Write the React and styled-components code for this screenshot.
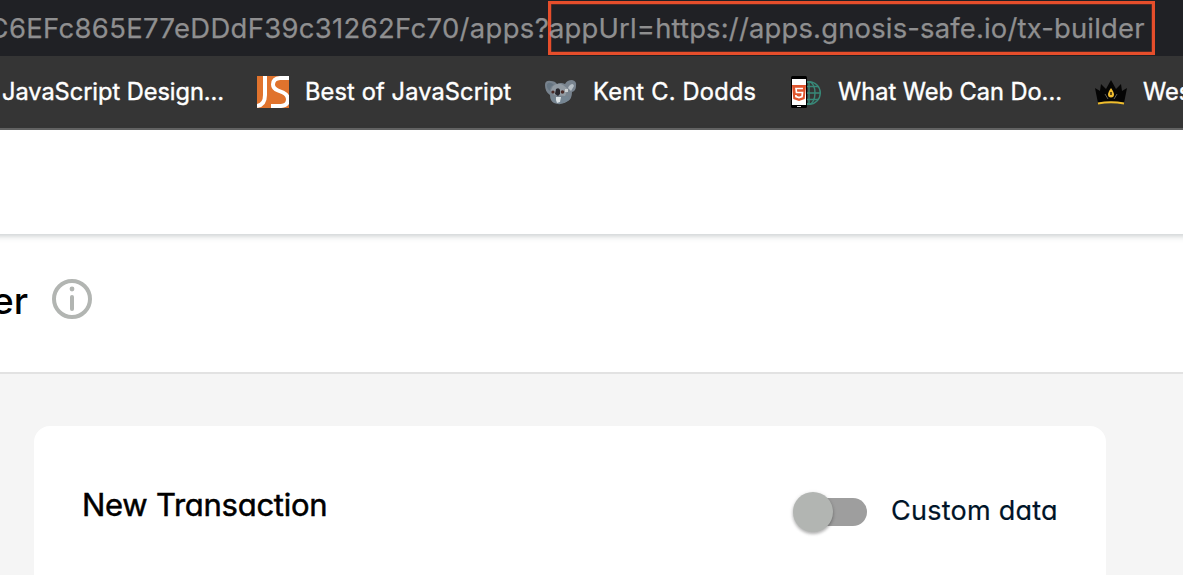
import React from "react";
import styled, { createGlobalStyle } from "styled-components";

const GlobalStyle = createGlobalStyle`
  * { box-sizing: border-box; }
  html, body { margin: 0; overflow: hidden; background: #f5f5f5; }
`;

const Page = styled.div`
  display: flex;
  flex-direction: column;
  width: 1183px;
  height: 575px;
  overflow: hidden;
  background: #f5f5f5;
  font-family: Inter, "Liberation Sans", sans-serif;
  white-space: pre;
`;

const AddressBar = styled.div`
  display: flex;
  flex: none;
  height: 56px;
  padding-top: 1px;
  background: #202125;
  color: #8f8f90;
  font-size: 27.4px;
  line-height: 55px;
  -webkit-text-stroke: 0.25px currentColor;
`;

const UrlStart = styled.span`
  display: flex;
  justify-content: flex-end;
  flex: none;
  width: 549px;
  letter-spacing: ${(p) => p.$tracking}px;
`;

const UrlQuery = styled.span`
  flex: none;
  width: 607px;
  height: 54px;
  margin-left: -1px;
  border: 3px solid #e64e2b;
  box-shadow: inset 0 0 0 0.5px #7c3428;
  line-height: 49px;
  text-indent: -2px;
  letter-spacing: ${(p) => p.$tracking}px;
`;

const BookmarksBar = styled.nav`
  display: flex;
  flex: none;
  align-items: center;
  height: 74px;
  padding-left: 2px;
  background: #353535;
  border-bottom: 2px solid #656565;
`;

const Bookmark = styled.div`
  display: flex;
  flex: none;
  align-items: center;
  gap: 16px;
  width: ${(p) => p.$width}px;
  color: #fff;
  font-size: 23.6px;
  font-weight: 400;
  -webkit-text-stroke: 0.4px currentColor;
  line-height: 32px;
  letter-spacing: ${(p) => p.$tracking}px;

  svg { flex: none; display: block; }
`;

const TopHeader = styled.header`
  position: relative;
  z-index: 1;
  flex: none;
  height: 104px;
  margin: 0 -10px;
  background: #fff;
  box-shadow: 0 2px 6px rgba(40, 54, 61, 0.25);
`;

const TitleBar = styled.section`
  display: flex;
  flex: none;
  align-items: center;
  gap: 24px;
  height: 140px;
  padding-bottom: 9px;
  background: #fff;
  border-bottom: 2px solid #e2e2e2;
`;

const AppTitle = styled.h1`
  display: flex;
  justify-content: flex-end;
  flex: none;
  width: 28px;
  margin: 0;
  padding-top: 4px;
  color: #000;
  font-size: 37px;
  font-weight: 500;
  line-height: 44px;
`;

const Card = styled.main`
  display: flex;
  flex: none;
  align-items: flex-start;
  justify-content: space-between;
  width: 1072px;
  height: 180px;
  margin: 52px 0 0 34px;
  padding: 58px 48px 0;
  background: #fff;
  border-radius: 16px 16px 0 0;
  font-feature-settings: "cv11" 1;
`;

const CardTitle = styled.h2`
  margin: 0;
  color: #000;
  font-size: 31px;
  font-weight: 400;
  -webkit-text-stroke: 0.5px currentColor;
  line-height: 42px;
  letter-spacing: ${(p) => p.$tracking}px;
`;

const SwitchField = styled.label`
  display: flex;
  align-items: center;
  width: 265px;
  margin-top: 5px;
  gap: 24px;
  color: #001428;
  font-size: 27px;
  -webkit-text-stroke: 0.2px currentColor;
  line-height: 44px;
  letter-spacing: ${(p) => p.$tracking}px;
`;

const Track = styled.span`
  display: flex;
  align-items: center;
  flex: none;
  width: 68px;
  height: 28px;
  margin: 2px 0 0 6px;
  border-radius: 14px;
  background: #9e9e9e;
`;

const Thumb = styled.span`
  flex: none;
  width: 40px;
  height: 40px;
  margin-left: -6px;
  border-radius: 50%;
  background: #b2b5b2;
  box-shadow: 0 2px 3px rgba(0, 0, 0, 0.22), 0 1px 4px rgba(0, 0, 0, 0.14);
`;

const JsLogo = () => (
  <svg width="32" height="32" viewBox="0 0 32 32">
    <rect width="32" height="32" fill="#e0732d" />
    <g fill="none" stroke="#fff" strokeWidth="4">
      <path d="M8 0v19q0 10-8 11" />
      <path d="M32 2h-9q-7 .5-7 6.500 0 4 5 6l5 2q5 2.500 5 7 0 6-7 6.500H14" />
    </g>
  </svg>
);

const Koala = () => (
  <svg width="32" height="32" viewBox="0 0 32 32">
    <path d="M0 9Q0 4 6 5q4 0 6 3 4-2 8 0 2-4 7-4 5 1 4 6 0 5-4 6 0 7-4 9-7 5-14 2-4-2-4-8-5-3-5-10Z" fill="#78838e" />
    <path d="M2 8q3-3 7 1-4 1-4 6-4-3-3-7Z" fill="#667582" />
    <path d="M24 10q4-4 5 0l-3 5-3-3Z" fill="#b7c0c6" />
    <path d="M8 10q5-4 10-1l5 4-3 7-11-1-3-5Z" fill="#929ba3" />
    <path d="M6 20q5 3 7 2l7-2q6 0 4 4-6 5-13 3-4-2-5-7Z" fill="#758592" />
    <path d="M11 21h5l-1 5-3 1-1-3Z" fill="#dce3e6" />
    <path d="M11 13q3-2 4 1v4l-2 2-3-2Z" fill="#28272e" />
    <circle cx="8" cy="16" r="1.600" fill="#4b2b28" />
    <circle cx="17.500" cy="16" r="1.800" fill="#4b2b28" />
    <path d="M20 13h3v3h-3Z" fill="#cdd1d2" />
  </svg>
);

const PhoneGlobe = () => (
  <svg width="32" height="32" viewBox="0 0 32 32">
    <g fill="none" stroke="#388878" strokeWidth="1.400">
      <circle cx="19" cy="17" r="11.300" />
      <ellipse cx="19" cy="17" rx="6" ry="11.300" />
      <path d="M19 5v24M15 10.500h13M15 17h16M15 23.500h13" />
    </g>
    <rect x="1" width="16" height="32" rx="1.500" fill="#000" />
    <path d="M2 3h14v26H2Z" fill="#fff" />
    <path d="M2 9h14l-1.300 14L9 25l-5.700-2Z" fill="#df552d" />
    <path d="M13 12.500H6l.5 4h6l-.5 4-3 1-3-1-.1-1.500" fill="none" stroke="#fff" strokeWidth="1.700" />
    <path d="M7 30.500h4" stroke="#ddd" />
  </svg>
);

const Crown = () => (
  <svg width="32" height="32" viewBox="0 0 32 32">
    <path d="m0 12 5 3 1-7 5 5 5-9 5 9 5-5 1 7 5-3-3 15q-13-3-26 0Z" fill="#050505" />
    <path d="M3 27.500q13-2.500 26 0" fill="none" stroke="#efbd2d" strokeWidth="2" />
    <path d="M16 12q3 4 3 6.500 0 3-3 3t-3-3q0-2.500 3-6.500Z" fill="#f1bd2f" />
    <path d="M16 16v3" stroke="#302711" strokeWidth="1.500" />
    <path d="m10 18 3 5m9-5-3 5" stroke="#77756c" strokeWidth=".8" />
  </svg>
);

const InfoIcon = () => (
  <svg width="40" height="40" viewBox="0 0 40 40">
    <circle cx="20" cy="20" r="18" fill="none" stroke="#b2b5b2" strokeWidth="4" />
    <circle cx="20" cy="10" r="2.400" fill="#b2b5b2" />
    <path d="M20 18v12" stroke="#b2b5b2" strokeWidth="4" strokeLinecap="round" />
  </svg>
);

export default function App() {
  return (
    <Page>
      <GlobalStyle />
      <AddressBar>
        <UrlStart $tracking={0.36}>C6EFc865E77eDDdF39c31262Fc70/apps?</UrlStart>
        <UrlQuery $tracking={0.19}>appUrl=https://apps.gnosis-safe.io/tx-builder</UrlQuery>
      </AddressBar>
      <BookmarksBar>
        <Bookmark $width={255} $tracking={-0.04}>JavaScript Design...</Bookmark>
        <Bookmark $width={288} $tracking={0.13}><JsLogo />Best of JavaScript</Bookmark>
        <Bookmark $width={245} $tracking={0.24}><Koala />Kent C. Dodds</Bookmark>
        <Bookmark $width={305} $tracking={-0.02}><PhoneGlobe />What Web Can Do...</Bookmark>
        <Bookmark $width={120} $tracking={0}><Crown />Wes Bos</Bookmark>
      </BookmarksBar>
      <TopHeader />
      <TitleBar>
        <AppTitle>er</AppTitle>
        <InfoIcon />
      </TitleBar>
      <Card>
        <CardTitle $tracking={-0.26}>New Transaction</CardTitle>
        <SwitchField $tracking={0.25}>
          <Track><Thumb /></Track>
          Custom data
        </SwitchField>
      </Card>
    </Page>
  );
}
